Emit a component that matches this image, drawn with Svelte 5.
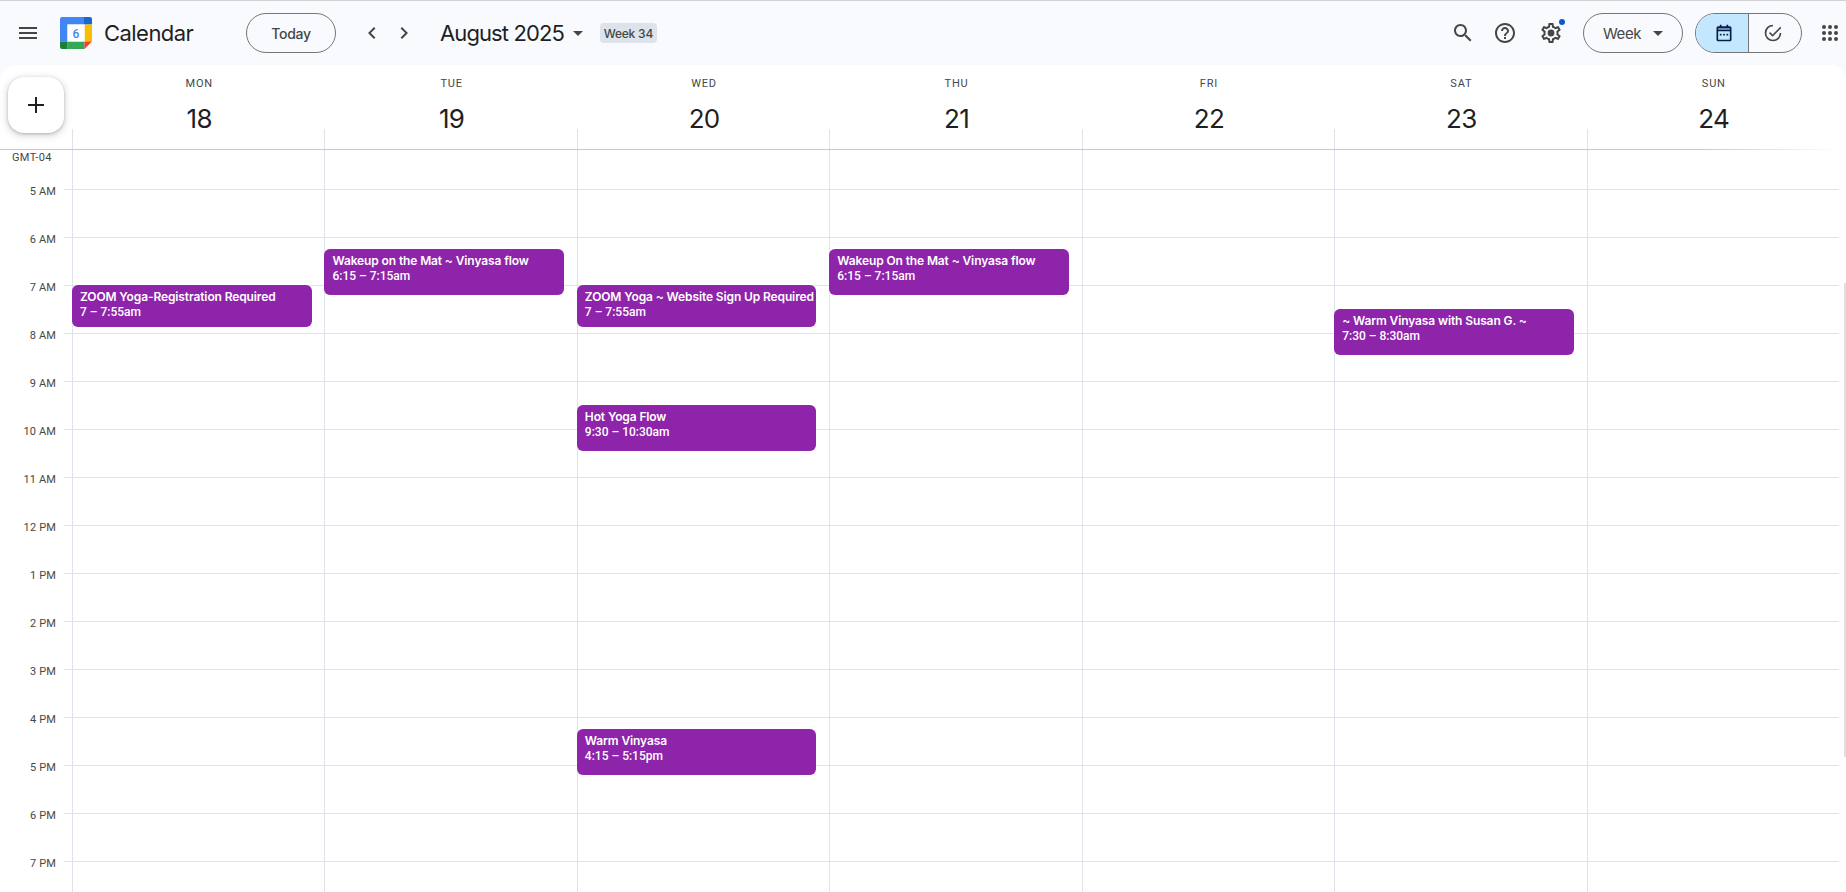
<script>
  const days = [
    { name: 'MON', date: 18, events: [{ title: 'ZOOM Yoga-Registration Required', time: '7 – 7:55am', start: 7, mins: 55 }] },
    { name: 'TUE', date: 19, events: [{ title: 'Wakeup on the Mat ~ Vinyasa flow', time: '6:15 – 7:15am', start: 6.25, mins: 60 }] },
    { name: 'WED', date: 20, events: [
      { title: 'ZOOM Yoga ~ Website Sign Up Required', time: '7 – 7:55am', start: 7, mins: 55 },
      { title: 'Hot Yoga Flow', time: '9:30 – 10:30am', start: 9.5, mins: 60 },
      { title: 'Warm Vinyasa', time: '4:15 – 5:15pm', start: 16.25, mins: 60 }
    ] },
    { name: 'THU', date: 21, events: [{ title: 'Wakeup On the Mat ~ Vinyasa flow', time: '6:15 – 7:15am', start: 6.25, mins: 60 }] },
    { name: 'FRI', date: 22, events: [] },
    { name: 'SAT', date: 23, events: [{ title: '~ Warm Vinyasa with Susan G. ~', time: '7:30 – 8:30am', start: 7.5, mins: 60 }] },
    { name: 'SUN', date: 24, events: [] }
  ];
  const hours = ['5 AM','6 AM','7 AM','8 AM','9 AM','10 AM','11 AM','12 PM','1 PM','2 PM','3 PM','4 PM','5 PM','6 PM','7 PM'];
  const eventStyle = (e) => `top:${39 + (e.start - 5) * 48}px;height:${(e.mins / 60) * 48 - 2}px`;
</script>

<div class="page">
  <header class="bar">
    <button class="icon menu" aria-label="Main menu">
      <svg viewBox="0 0 24 24" width="24" height="24"><path d="M3 18h18v-2H3v2zm0-5h18v-2H3v2zm0-7v2h18V6H3z"/></svg>
    </button>
    <div class="logo">
      <svg viewBox="0 0 32 32" width="32" height="32" aria-hidden="true">
        <path d="M2 0h22v7.5H7.5V24.5H0V2a2 2 0 0 1 2-2z" fill="#4285f4"/>
        <path d="M24 0h6a2 2 0 0 1 2 2v5.5h-8z" fill="#1967d2"/>
        <rect x="24.5" y="7.5" width="7.5" height="17" fill="#fbbc04"/>
        <rect x="7.5" y="24.5" width="17" height="7.5" fill="#34a853"/>
        <path d="M0 24.5h7.5V32H2a2 2 0 0 1-2-2z" fill="#188038"/>
        <path d="M24.5 24.5H32L24.5 32z" fill="#ea4335"/>
        <rect x="7.5" y="7.5" width="17" height="17" fill="#fff"/>
        <text x="16" y="21" text-anchor="middle" class="six">6</text>
      </svg>
    </div>
    <span class="brand">Calendar</span>
    <button class="pill today">Today</button>
    <div class="nav">
      <button class="icon" aria-label="Previous week"><svg viewBox="0 0 24 24" width="24" height="24"><path d="M15.41 7.41L14 6l-6 6 6 6 1.41-1.41L10.83 12z"/></svg></button>
      <button class="icon" aria-label="Next week"><svg viewBox="0 0 24 24" width="24" height="24"><path d="M10 6L8.59 7.41 13.17 12l-4.58 4.59L10 18l6-6z"/></svg></button>
    </div>
    <span class="month">August 2025</span>
    <svg class="caret" viewBox="0 0 10 5" width="10" height="5"><path d="M0 0l5 5 5-5z"/></svg>
    <span class="chip">Week 34</span>

    <div class="right">
      <button class="icon" aria-label="Search"><svg viewBox="0 0 24 24" width="24" height="24"><path d="M15.5 14h-.79l-.28-.27C15.41 12.59 16 11.11 16 9.5 16 5.91 13.09 3 9.5 3S3 5.91 3 9.5 5.91 16 9.5 16c1.61 0 3.09-.59 4.23-1.57l.27.28v.79l5 4.99L20.49 19l-4.99-5zm-6 0C7.01 14 5 11.99 5 9.5S7.01 5 9.5 5 14 7.01 14 9.5 11.99 14 9.5 14z"/></svg></button>
      <button class="icon" aria-label="Support"><svg viewBox="0 0 24 24" width="24" height="24"><path d="M11 18h2v-2h-2v2zm1-16C6.48 2 2 6.48 2 12s4.48 10 10 10 10-4.48 10-10S17.52 2 12 2zm0 18c-4.41 0-8-3.59-8-8s3.59-8 8-8 8 3.59 8 8-3.59 8-8 8zm0-14c-2.21 0-4 1.79-4 4h2c0-1.1.9-2 2-2s2 .9 2 2c0 2-3 1.75-3 5h2c0-2.25 3-2.5 3-5 0-2.21-1.79-4-4-4z"/></svg></button>
      <button class="icon gear" aria-label="Settings">
        <svg viewBox="0 0 24 24" width="24" height="24"><path d="M19.43 12.98c.04-.32.07-.64.07-.98 0-.34-.03-.66-.07-.98l2.11-1.65c.19-.15.24-.42.12-.64l-2-3.46c-.09-.16-.26-.25-.44-.25-.06 0-.12.01-.17.03l-2.49 1c-.52-.4-1.08-.73-1.69-.98l-.38-2.65C14.46 2.18 14.25 2 14 2h-4c-.25 0-.46.18-.49.42l-.38 2.65c-.61.25-1.17.59-1.69.98l-2.49-1c-.06-.02-.12-.03-.18-.03-.17 0-.34.09-.43.25l-2 3.46c-.13.22-.07.49.12.64l2.11 1.65c-.04.32-.07.65-.07.98 0 .33.03.66.07.98l-2.11 1.65c-.19.15-.24.42-.12.64l2 3.46c.09.16.26.25.44.25.06 0 .12-.01.17-.03l2.49-1c.52.4 1.08.73 1.69.98l.38 2.65c.03.24.24.42.49.42h4c.25 0 .46-.18.49-.42l.38-2.65c.61-.25 1.17-.59 1.69-.98l2.49 1c.06.02.12.03.18.03.17 0 .34-.09.43-.25l2-3.46c.12-.22.07-.49-.12-.64l-2.11-1.65zm-1.98-1.71c.04.31.05.52.05.73 0 .21-.02.43-.05.73l-.14 1.13.89.7 1.08.84-.7 1.21-1.27-.51-1.04-.42-.9.68c-.43.32-.84.56-1.25.73l-1.06.43-.16 1.13-.2 1.35h-1.4l-.19-1.35-.16-1.13-1.06-.43c-.43-.18-.83-.41-1.23-.71l-.91-.7-1.06.43-1.27.51-.7-1.21 1.08-.84.89-.7-.14-1.13c-.03-.31-.05-.54-.05-.74s.02-.43.05-.73l.14-1.13-.89-.7-1.08-.84.7-1.21 1.27.51 1.04.42.9-.68c.43-.32.84-.56 1.25-.73l1.06-.43.16-1.13.2-1.35h1.39l.19 1.35.16 1.13 1.06.43c.43.18.83.41 1.23.71l.91.7 1.06-.43 1.27-.51.7 1.21-1.07.85-.89.7.14 1.13z"/><circle cx="12" cy="12" r="3.4"/></svg>
        <span class="dot"></span>
      </button>
      <button class="pill week">Week<svg viewBox="0 0 10 5" width="10" height="5"><path d="M0 0l5 5 5-5z"/></svg></button>
      <div class="toggle">
        <button class="seg on" aria-label="Calendar"><svg viewBox="0 0 24 24" width="20" height="20"><path d="M8 2v3M16 2v3" stroke="#041e49" stroke-width="2" fill="none"/><path d="M5 4h14a2 2 0 0 1 2 2v14a2 2 0 0 1-2 2H5a2 2 0 0 1-2-2V6a2 2 0 0 1 2-2zm0 2v2h14V6zm0 4v10h14V10z" fill="#041e49" fill-rule="evenodd"/><rect x="5" y="6" width="14" height="2" fill="#041e49" opacity=".45"/><rect x="7" y="13" width="2" height="2" fill="#041e49"/><rect x="11" y="13" width="2" height="2" fill="#041e49"/><rect x="15" y="13" width="2" height="2" fill="#041e49"/></svg></button>
        <button class="seg task" aria-label="Tasks"><svg viewBox="0 0 24 24" width="20" height="20"><path d="M12 2a10 10 0 1 0 10 10h-2a8 8 0 1 1-8-8z"/><path d="M20.6 4.6L11.5 13.7 8.6 10.8l-1.4 1.4 4.3 4.3L22 6z"/></svg></button>
      </div>
      <button class="icon apps" aria-label="Google apps">
        <svg viewBox="0 0 16 16" width="16" height="16"><g>{#each [2, 8, 14] as y}{#each [2, 8, 14] as x}<circle cx={x} cy={y} r="2"/>{/each}{/each}</g></svg>
      </button>
    </div>
  </header>

  <main class="main">
    <section class="head">
      <div class="head-side">
        <button class="create" aria-label="Create">
          <svg viewBox="0 0 24 24" width="24" height="24"><path d="M20 13h-7v7h-2v-7H4v-2h7V4h2v7h7z" fill="#1f1f1f"/></svg>
        </button>
      </div>
      {#each days as d}
        <div class="head-day">
          <span class="dname">{d.name}</span>
          <span class="dnum">{d.date}</span>
        </div>
      {/each}
    </section>

    <section class="grid">
      <div class="gutter">
        <div class="gmt">GMT-04</div>
        {#each hours as h}
          <div class="hour"><span>{h}</span></div>
        {/each}
      </div>
      {#each days as d}
        <div class="day">
          <div class="slot first"></div>
          {#each hours as _}
            <div class="slot"></div>
          {/each}
          {#each d.events as e}
            <div class="event" style={eventStyle(e)}>
              <div class="etitle">{e.title}</div>
              <div class="etime">{e.time}</div>
            </div>
          {/each}
        </div>
      {/each}
    </section>
    <div class="thumb"></div>
  </main>
</div>

<style>
  :global(body) { margin: 0; background: #f8fafd; }
  * { box-sizing: border-box; }
  button { font: inherit; background: none; border: 0; padding: 0; color: inherit; }
  .page {
    height: 892px; overflow: hidden; display: flex; flex-direction: column;
    background: #f8fafd; border-top: 1px solid #d0d2d4;
    font-family: Roboto, "Liberation Sans", sans-serif; color: #1f1f1f;
  }
  .bar { height: 64px; flex: none; display: flex; align-items: center; position: relative; }
  .icon { width: 32px; height: 32px; display: flex; align-items: center; justify-content: center; flex: none; position: relative; }
  .icon svg, .caret, .week svg { fill: #444746; }
  .menu { margin-left: 12px; }
  .logo { margin-left: 16px; width: 32px; height: 32px; flex: none; }
  .logo svg { display: block; }
  .six { font: 500 12px Roboto, sans-serif; fill: #4285f4; }
  .brand { margin-left: 12px; font: 400 22px/28px Inter, sans-serif; letter-spacing: -.55px; width: 142px; }
  .pill {
    height: 40px; border: 1px solid #747775; border-radius: 20px;
    display: flex; align-items: center; justify-content: center;
    font: 500 14px Inter, sans-serif; letter-spacing: -.25px; color: #444746; flex: none;
  }
  .today { width: 90px; }
  .nav { display: flex; gap: 0; margin-left: 20px; }
  .month { margin-left: 20px; font: 400 22px/28px Inter, sans-serif; letter-spacing: -.9px; }
  .caret { margin-left: 9px; flex: none; }
  .chip { margin-left: 17px; background: #dde3ea; border-radius: 4px; height: 20px; width: 57px; display: flex; align-items: center; justify-content: center; font: 500 12px Inter, sans-serif; letter-spacing: -.2px; color: #444746; }
  .right { margin-left: auto; display: flex; align-items: center; }
  .right .icon + .icon { margin-left: 10px; }
  .gear { margin-left: 14px !important; }
  .dot { position: absolute; width: 6px; height: 6px; border-radius: 50%; background: #0b57d0; top: 2px; right: 2px; }
  .week { width: 100px; margin-left: 16px; gap: 12px; font-size: 15px; font-weight: 400; letter-spacing: -.4px; }
  .toggle { width: 107px; height: 40px; margin-left: 12px; border: 1px solid #747775; border-radius: 20px; display: flex; overflow: hidden; flex: none; }
  .seg { flex: 1; display: flex; align-items: center; justify-content: center; }
  .seg svg { fill: #444746; }
  .seg.on { background: #c2e7ff; border-right: 1px solid #747775; padding-left: 4px; }
  .seg.task { padding-right: 4px; }
  .right .apps { margin-left: 12px; }
  .main { flex: 1; background: #fff; border-radius: 16px 16px 0 0; position: relative; overflow: hidden; }
  .head { display: grid; grid-template-columns: 72px repeat(7, 1fr); width: 1839px; height: 85px; border-bottom: 1px solid #c7c9cc; position: relative; }
  .head::after { content: ""; position: absolute; right: -1px; bottom: -1px; width: 140px; height: 1px; background: linear-gradient(to right, rgba(255,255,255,0), #fff); }
  .head-side { padding: 12px 0 0 8px; }
  .create { width: 56px; height: 56px; border-radius: 16px; background: #fff; display: flex; align-items: center; justify-content: center; box-shadow: 0 1px 3px rgba(60,64,67,.3), 0 2px 6px 2px rgba(60,64,67,.15); }
  .head-day { position: relative; display: flex; flex-direction: column; align-items: center; padding: 11px 0 0 2px; }
  .head-day::before { content: ""; position: absolute; left: 0; bottom: 0; width: 1px; height: 20px; background: #dde3ea; }
  .dname { font: 400 11px/14px Roboto, sans-serif; letter-spacing: .8px; color: #444746; margin-top: 1px; }
  .dnum { font: 400 26px/32px Inter, sans-serif; letter-spacing: -.7px; margin-top: 12px; color: #1f1f1f; }
  .grid { display: grid; grid-template-columns: 72px repeat(7, 1fr); width: 1839px; }
  .gutter { position: relative; }
  .gmt { height: 39px; padding: 1px 0 0 12px; font: 400 11px/14px Roboto, sans-serif; letter-spacing: .35px; color: #444746; }
  .hour { height: 48px; position: relative; border-top: 1px solid transparent; }
  .hour::after { content: ""; position: absolute; left: 64px; top: -1px; width: 8px; height: 1px; background: #dde3ea; }
  .hour span { position: absolute; right: 16px; top: -5px; font: 400 11px/14px Roboto, sans-serif; letter-spacing: .15px; color: #444746; }
  .day { position: relative; border-left: 1px solid #dde3ea; }
  .slot { height: 48px; border-bottom: 1px solid #dde3ea; }
  .slot.first { height: 40px; }
  .event { position: absolute; left: -1px; width: 239.6px; background: #8e24aa; color: #fff; border-radius: 6px; padding: 4px 0 0 8px; overflow: hidden; white-space: nowrap; }
  .etitle { font: 600 12px/16px Inter, sans-serif; letter-spacing: -.12px; }
  .etime { font: 500 12px/15px Roboto, sans-serif; }
  .thumb { position: absolute; right: 0; top: 218px; width: 2px; height: 474px; background: #e0e0e0; }
</style>
